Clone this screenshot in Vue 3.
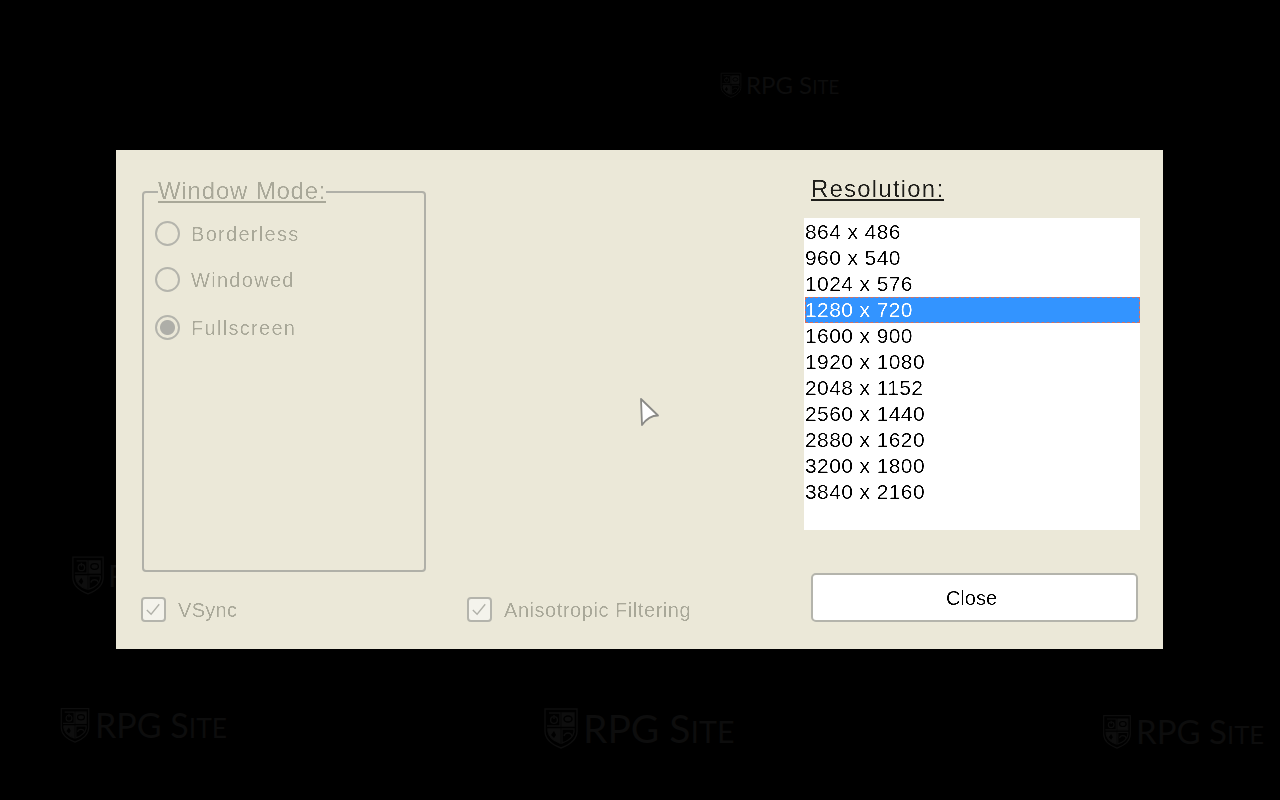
<script setup>
const modes = [
  { label: 'Borderless', checked: false },
  { label: 'Windowed', checked: false },
  { label: 'Fullscreen', checked: true }
]
const resolutions = ['864 x 486','960 x 540','1024 x 576','1280 x 720','1600 x 900','1920 x 1080','2048 x 1152','2560 x 1440','2880 x 1620','3200 x 1800','3840 x 2160']
const selected = '1280 x 720'
const marks = ['m-top', 'm-left', 'm-bl', 'm-bc', 'm-br']
</script>

<template>
  <div class="screen">
    <svg class="defs" width="0" height="0" aria-hidden="true">
      <filter id="crisp" x="-5%" y="-5%" width="110%" height="110%" color-interpolation-filters="sRGB">
        <feComponentTransfer>
          <feFuncA type="table" tableValues="0 0 0 0.55 1 1" />
        </feComponentTransfer>
        <feGaussianBlur stdDeviation="0.35" />
      </filter>
    </svg>

    <div v-for="m in marks" :key="m" class="mark" :class="m">
      <svg class="shield" viewBox="0 0 36 42" fill="none" stroke="#0e0e0e" stroke-width="1.4">
        <path d="M2 2H34V24C34 33 26 38 18 41C10 38 2 33 2 24Z" />
        <path d="M6 6H17V19H4M19 6H31V19H19ZM5 22H17V36C11 34 6 31 5 24ZM19 22H31V25C30 31 25 34 19 36Z" />
        <path d="M19 6H31V19H19Z" fill="#0e0e0e" stroke="none" />
        <path d="M5 22H17V36C11 34 6 31 5 24Z" fill="#0e0e0e" stroke="none" />
        <circle cx="11" cy="13" r="3.4" />
        <path d="M11 8V12" />
        <ellipse cx="25" cy="12" rx="4" ry="3" stroke="#000" />
        <path d="M11 24L13 28L11 31L8 28Z" fill="#000" stroke="none" />
        <path d="M21 29C22 25 28 25 29 29" />
      </svg>
      <span class="mark-text">RPG S<small>ITE</small></span>
    </div>

    <section class="panel">
      <div class="col-left">
        <fieldset class="group">
          <legend class="crisp">Window Mode:</legend>
          <div v-for="m in modes" :key="m.label" class="radio-row">
            <span class="radio" :class="{ on: m.checked }"></span>
            <span class="muted crisp">{{ m.label }}</span>
          </div>
        </fieldset>
        <div class="check-row">
          <span class="check">
            <svg viewBox="0 0 22 22" fill="none" stroke="#b0b0a8" stroke-width="1.4"><path d="M4 11.5L8.5 16L17 5.5" /></svg>
          </span>
          <span class="muted crisp vs">VSync</span>
        </div>
      </div>

      <div class="col-mid">
        <div class="check-row aniso">
          <span class="check">
            <svg viewBox="0 0 22 22" fill="none" stroke="#b0b0a8" stroke-width="1.4"><path d="M4 11.5L8.5 16L17 5.5" /></svg>
          </span>
          <span class="muted crisp thin">Anisotropic Filtering</span>
        </div>
      </div>

      <div class="col-right">
        <h2 class="title crisp">Resolution:</h2>
        <ul class="list">
          <li v-for="r in resolutions" :key="r" :class="{ sel: r === selected }"><span class="crisp">{{ r }}</span></li>
        </ul>
        <button class="close"><span class="crisp">Close</span></button>
      </div>

      <svg class="pointer" viewBox="0 0 22 30" width="22" height="30">
        <path d="M2 1L19 17.5C14 17.5 8 20 3 27Z" fill="#fff" stroke="#8a8a86" stroke-width="1.8" stroke-linejoin="round" />
      </svg>
    </section>
  </div>
</template>

<style>
html, body { background: #000; }
</style>

<style scoped>
.defs { position: absolute; }
.crisp { filter: url(#crisp); }
.screen {
  position: relative;
  width: 1280px;
  height: 800px;
  overflow: hidden;
  background: #000;
  padding: 150px 117px 151px 116px;
  box-sizing: border-box;
  font-family: "Liberation Sans", Arial, sans-serif;
  font-size: 20px;
}
.panel {
  position: relative;
  display: flex;
  align-items: flex-end;
  box-sizing: border-box;
  height: 499px;
  padding: 0 23px 27px 26px;
  background: #ebe8d8;
}
.col-left { display: flex; flex-direction: column; width: 285px; flex: none; }
.group {
  box-sizing: border-box;
  margin: 0;
  width: 284px;
  height: 391px;
  padding: 18px 0 0 11px;
  border: 2px solid #b0b0a8;
  border-radius: 4px;
}
.group legend {
  padding: 0;
  margin-left: 3px;
  font-size: 24px;
  line-height: 20px;
  letter-spacing: .8px;
  color: #a9a899;
  border-bottom: 2px solid #a9a899;
}
.radio-row {
  display: flex;
  align-items: center;
  gap: 11px;
  height: 25px;
  margin-bottom: 21px;
  letter-spacing: 1.3px;
}
.radio-row:nth-of-type(2) { margin-bottom: 23px; }
.radio {
  box-sizing: border-box;
  width: 25px;
  height: 25px;
  flex: none;
  border: 2px solid #b4b4ac;
  border-radius: 50%;
}
.radio.on { background: radial-gradient(circle, #aeaea8 0 7px, #ebe8d8 8px); }
.muted { color: #a9a899; position: relative; top: 1px; }
.vs { letter-spacing: .3px; }
.thin { letter-spacing: .55px; }
.check-row {
  display: flex;
  align-items: center;
  gap: 12px;
  height: 25px;
  margin-top: 25px;
  margin-left: -1px;
}
.check {
  box-sizing: border-box;
  width: 25px;
  height: 25px;
  flex: none;
  border: 2px solid #b4b4ac;
  border-radius: 4px;
  background: #f4f3ec;
}
.check svg { display: block; width: 21px; height: 21px; }
.col-mid { flex: 1; padding-left: 41px; }
.aniso { margin-top: 0; }
.col-right { width: 336px; flex: none; }
.title {
  margin: 0 0 17px 7px;
  width: fit-content;
  font-size: 24px;
  font-weight: normal;
  line-height: 21px;
  letter-spacing: 1.2px;
  color: #1e1e1a;
  border-bottom: 2px solid #1e1e1a;
}
.list {
  box-sizing: border-box;
  height: 312px;
  margin: 0;
  padding: 1px 0 0 1px;
  list-style: none;
  background: #fff;
  color: #000;
  font-size: 21px;
}
.list li {
  box-sizing: border-box;
  height: 26px;
  line-height: 26px;
  letter-spacing: .4px;
}
.list li.sel {
  color: #fff;
  background: #3394ff;
  outline: 1px dashed #d8705c;
  outline-offset: -1px;
}
.close {
  display: block;
  box-sizing: border-box;
  width: 327px;
  height: 49px;
  margin: 43px 0 0 7px;
  padding: 2px 6px 0 0;
  background: #fff;
  color: #000;
  font: inherit;
  border: 2px solid #b4b4ac;
  border-radius: 5px;
}
.pointer { position: absolute; left: 523px; top: 248px; }
.mark { position: absolute; display: flex; align-items: center; gap: 3px; }
.mark-text { color: #0d0d0d; font-family: Lato, sans-serif; white-space: nowrap; }
.mark-text small { font-size: .78em; }
.shield { flex: none; display: block; }
.m-top { left: 719px; top: 70px; }
.m-top .shield { width: 24px; height: 26px; }
.m-top .mark-text { font-size: 24px; }
.m-left { left: 71px; top: 555px; }
.m-left .shield { width: 34px; height: 40px; }
.m-left .mark-text { font-size: 30px; }
.m-bl { left: 58px; top: 704px; }
.m-bl .shield { width: 34px; height: 36px; }
.m-bl .mark-text { font-size: 34px; }
.m-bc { left: 542px; top: 705px; }
.m-bc .shield { width: 38px; height: 42px; }
.m-bc .mark-text { font-size: 39px; }
.m-br { left: 1101px; top: 711px; }
.m-br .shield { width: 32px; height: 35px; }
.m-br .mark-text { font-size: 33px; }
</style>
